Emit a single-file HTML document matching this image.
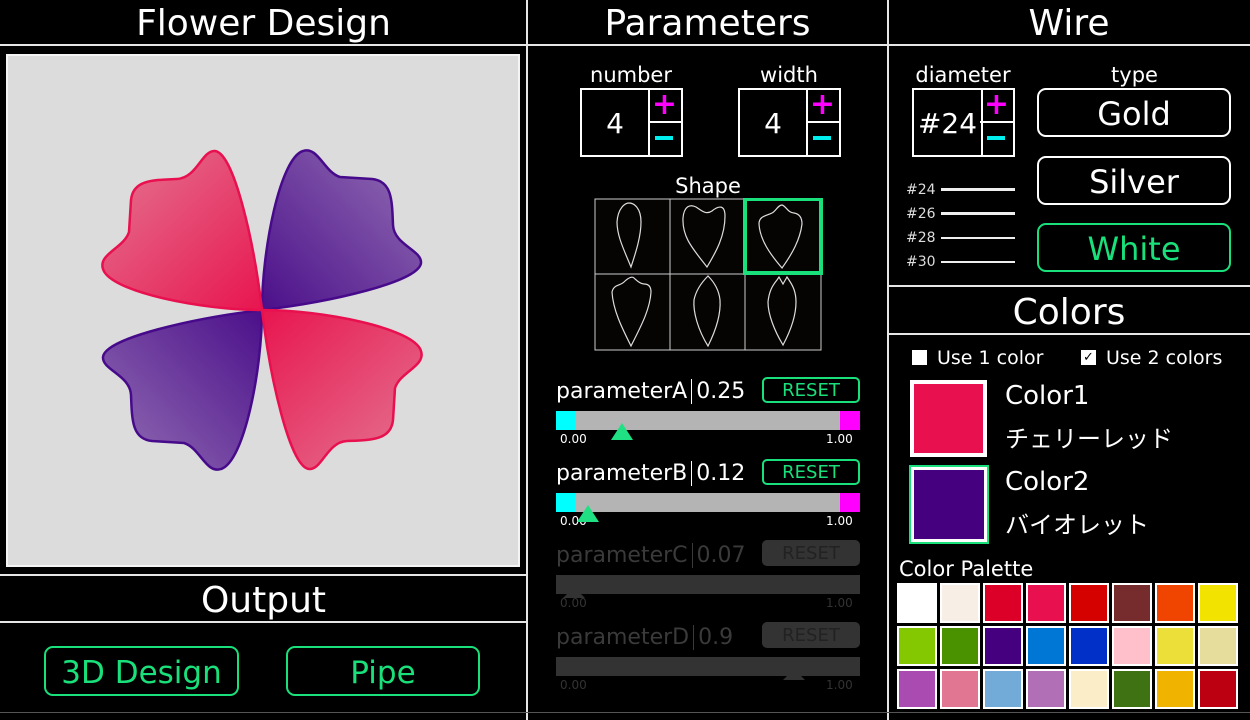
<!DOCTYPE html>
<html><head><meta charset="utf-8"><style>
*{margin:0;padding:0;box-sizing:border-box}
body{width:1250px;height:720px;background:#000;position:relative;overflow:hidden;font-family:"DejaVu Sans","Liberation Sans","Noto Sans CJK JP",sans-serif;color:#fff}
.a{position:absolute}
.h{position:absolute;background:#e6e6e6}
.t{position:absolute;text-align:center;white-space:nowrap}
.btn{position:absolute;border:2px solid #fff;border-radius:9px;text-align:center;color:#fff}
.g{border-color:#19e07a;color:#19e07a}
.sp{position:absolute;border:2px solid #fff}
.sp .v{position:absolute;left:0;top:0;height:100%;text-align:center;font-size:28px;border-right:2px solid #fff}
.sp .pl{position:absolute;right:0;top:0;height:50%;border-bottom:2px solid #fff}
.cell{position:absolute;width:40px;height:40px;border:2px solid #fff}
</style></head><body>
<div class="h" style="left:526px;top:0;width:2px;height:720px"></div>
<div class="h" style="left:887px;top:0;width:2px;height:720px"></div>
<div class="h" style="left:0;top:44px;width:1250px;height:2px"></div>
<div class="h" style="left:0;top:574px;width:527px;height:2px"></div>
<div class="h" style="left:0;top:621px;width:527px;height:2px"></div>
<div class="h" style="left:888px;top:285px;width:362px;height:2px"></div>
<div class="h" style="left:888px;top:333px;width:362px;height:2px"></div>
<div class="h" style="left:0;top:712px;width:1250px;height:1px;background:#555"></div>

<div class="t" style="left:0;width:527px;top:3px;font-size:36px">Flower Design</div>
<div class="t" style="left:527px;width:361px;top:3px;font-size:36px">Parameters</div>
<div class="t" style="left:888px;width:362px;top:3px;font-size:36px">Wire</div>
<div class="t" style="left:0;width:527px;top:580px;font-size:36px">Output</div>
<div class="t" style="left:888px;width:362px;top:292px;font-size:36px">Colors</div>

<div class="a" style="left:6px;top:54px;width:514px;height:513px;background:#dcdcdc;border:2px solid #f4f4f4"></div>
<svg class="a" style="left:0;top:0" width="527" height="575">
<defs>
<linearGradient id="gp" gradientUnits="userSpaceOnUse" x1="262" y1="310" x2="410" y2="170"><stop offset="0" stop-color="#4b0f8a"/><stop offset="1" stop-color="#8c66b0"/></linearGradient>
<linearGradient id="gr" gradientUnits="userSpaceOnUse" x1="262" y1="310" x2="410" y2="170"><stop offset="0" stop-color="#e8154f"/><stop offset="1" stop-color="#e46d8c"/></linearGradient>
<path id="pt" d="M262,310 C262,250 280,158 303,151 C318,146 324,172 340,177 L372,179 C392,181 392,200 393,225 C394,245 422,250 421,263 C419,282 330,302 262,310 Z"/>
</defs>
<use href="#pt" fill="url(#gp)" stroke="#460a8a" stroke-width="2.5"/>
<use href="#pt" fill="url(#gp)" stroke="#460a8a" stroke-width="2.5" transform="rotate(180 262 310)"/>
<use href="#pt" fill="url(#gr)" stroke="#e8104f" stroke-width="2.5" transform="rotate(-90 262 310)"/>
<use href="#pt" fill="url(#gr)" stroke="#e8104f" stroke-width="2.5" transform="rotate(90 262 310)"/>
</svg>

<div class="btn g" style="left:44px;top:646px;width:195px;height:50px;font-size:31px;line-height:50px">3D Design</div>
<div class="btn g" style="left:286px;top:646px;width:194px;height:50px;font-size:31px;line-height:50px">Pipe</div>

<div class="t" style="left:580px;width:102px;top:63px;font-size:21px">number</div>
<div class="t" style="left:738px;width:102px;top:63px;font-size:21px">width</div>
<div class="sp" style="left:580px;top:88px;width:103px;height:69px"><div class="v" style="width:68px;line-height:68px">4</div><div class="pl" style="width:33px;color:#f0f;font-size:30px;line-height:30px;text-align:center;font-weight:bold">+</div><div class="a" style="right:8px;bottom:15px;width:18px;height:4px;background:#0ee"></div></div>
<div class="sp" style="left:738px;top:88px;width:103px;height:69px"><div class="v" style="width:68px;line-height:68px">4</div><div class="pl" style="width:33px;color:#f0f;font-size:30px;line-height:30px;text-align:center;font-weight:bold">+</div><div class="a" style="right:8px;bottom:15px;width:18px;height:4px;background:#0ee"></div></div>
<div class="t" style="left:595px;width:226px;top:174px;font-size:21px">Shape</div>
<svg class="a" style="left:594px;top:198px" width="230" height="154">
<rect x="1" y="1" width="226" height="151" fill="#060303" stroke="#ccc"/>
<line x1="76" y1="1" x2="76" y2="152" stroke="#ccc"/><line x1="151" y1="1" x2="151" y2="152" stroke="#ccc"/><line x1="1" y1="76" x2="227" y2="76" stroke="#ccc"/>
<g fill="none" stroke="#ddd" stroke-width="1.2">
<path d="M37,69 C30,52 23,38 23,24 C24,10 31,5 35,5 C40,5 47,10 47,24 C47,38 42,54 37,69Z"/>
<path d="M113,69 C100,52 88,40 89,20 C90,8 96,6 102,9 C108,13 112,17 118,13 C124,8 131,6 131,18 C131,38 122,54 113,69Z"/>
<path d="M188,70 C176,56 166,42 165,26 C165,18 172,18 178,15 C182,13 184,7 188,7 C192,8 194,15 200,15 C206,16 208,20 208,26 C206,42 198,56 188,70Z"/>
<path d="M37,148 C28,130 19,112 18,94 C20,86 26,88 30,84 C34,80 38,78 40,80 C42,82 46,86 50,86 C54,86 57,88 57,94 C56,112 46,130 37,148Z"/>
<path d="M114,148 C104,132 99,114 100,102 C102,92 108,84 114,78 C120,84 125,92 126,102 C127,116 122,132 114,148Z"/>
<path d="M189,147 C180,132 174,116 174,104 C175,94 178,88 183,82 L185,79 L189,86 L193,79 L195,82 C199,88 202,94 202,104 C202,118 197,132 189,147Z"/>
</g>
<rect x="151" y="1" width="76" height="74" fill="none" stroke="#19e07a" stroke-width="4"/>
</svg>

<div class="a" style="left:556px;top:379px;font-size:22px;white-space:nowrap">parameterA<span style="border-left:1px solid #fff;margin:0 4px"></span>0.25</div>
<div class="btn g" style="left:762px;top:377px;width:98px;height:26px;font-size:18px;line-height:24px;border-radius:5px">RESET</div>
<div class="a" style="left:556px;top:411px;width:304px;height:19px;background:#b4b4b4"></div>
<div class="a" style="left:556px;top:411px;width:19px;height:19px;background:#0ff"></div>
<div class="a" style="left:840px;top:411px;width:20px;height:19px;background:#f0f"></div>
<div class="a" style="left:611px;top:423px;border-left:11px solid transparent;border-right:11px solid transparent;border-bottom:17px solid #1fe082"></div>
<div class="a" style="left:560px;top:432px;font-size:12px">0.00</div>
<div class="a" style="left:826px;top:432px;font-size:12px">1.00</div>

<div class="a" style="left:556px;top:461px;font-size:22px;white-space:nowrap">parameterB<span style="border-left:1px solid #fff;margin:0 4px"></span>0.12</div>
<div class="btn g" style="left:762px;top:459px;width:98px;height:26px;font-size:18px;line-height:24px;border-radius:5px">RESET</div>
<div class="a" style="left:556px;top:493px;width:304px;height:19px;background:#b4b4b4"></div>
<div class="a" style="left:556px;top:493px;width:19px;height:19px;background:#0ff"></div>
<div class="a" style="left:840px;top:493px;width:20px;height:19px;background:#f0f"></div>
<div class="a" style="left:560px;top:514px;font-size:12px">0.00</div>
<div class="a" style="left:826px;top:514px;font-size:12px">1.00</div>
<div class="a" style="left:577px;top:505px;border-left:11px solid transparent;border-right:11px solid transparent;border-bottom:17px solid #1fe082"></div>

<div class="a" style="left:556px;top:543px;font-size:22px;white-space:nowrap;color:#3a3a3a">parameterC<span style="border-left:1px solid #3a3a3a;margin:0 4px"></span>0.07</div>
<div class="a" style="left:762px;top:540px;width:98px;height:26px;font-size:18px;line-height:28px;border-radius:5px;background:#333;color:#222;text-align:center">RESET</div>
<div class="a" style="left:556px;top:575px;width:304px;height:19px;background:#333"></div>
<div class="a" style="left:563px;top:587px;border-left:11px solid transparent;border-right:11px solid transparent;border-bottom:11px solid #333"></div>
<div class="a" style="left:560px;top:596px;font-size:12px;color:#333">0.00</div>
<div class="a" style="left:826px;top:596px;font-size:12px;color:#333">1.00</div>

<div class="a" style="left:556px;top:625px;font-size:22px;white-space:nowrap;color:#3a3a3a">parameterD<span style="border-left:1px solid #3a3a3a;margin:0 4px"></span>0.9</div>
<div class="a" style="left:762px;top:622px;width:98px;height:26px;font-size:18px;line-height:28px;border-radius:5px;background:#333;color:#222;text-align:center">RESET</div>
<div class="a" style="left:556px;top:657px;width:304px;height:19px;background:#333"></div>
<div class="a" style="left:783px;top:669px;border-left:11px solid transparent;border-right:11px solid transparent;border-bottom:11px solid #333"></div>
<div class="a" style="left:560px;top:678px;font-size:12px;color:#333">0.00</div>
<div class="a" style="left:826px;top:678px;font-size:12px;color:#333">1.00</div>

<div class="t" style="left:908px;width:110px;top:63px;font-size:21px">diameter</div>
<div class="t" style="left:1038px;width:193px;top:63px;font-size:21px">type</div>
<div class="sp" style="left:912px;top:88px;width:103px;height:69px"><div class="v" style="width:69px;line-height:68px">#24</div><div class="pl" style="width:33px;color:#f0f;font-size:30px;line-height:30px;text-align:center;font-weight:bold">+</div><div class="a" style="right:8px;bottom:15px;width:18px;height:4px;background:#0ee"></div></div>
<div class="btn" style="left:1037px;top:88px;width:194px;height:49px;font-size:32px;line-height:49px">Gold</div>
<div class="btn" style="left:1037px;top:156px;width:194px;height:49px;font-size:32px;line-height:49px">Silver</div>
<div class="btn g" style="left:1037px;top:223px;width:194px;height:49px;font-size:32px;line-height:49px">White</div>
<div class="a" style="left:906px;top:182px;font-size:14px;color:#ddd">#24</div><div class="a" style="left:941px;top:188px;width:74px;height:3px;background:#eee"></div>
<div class="a" style="left:906px;top:206px;font-size:14px;color:#ddd">#26</div><div class="a" style="left:941px;top:212px;width:74px;height:2.5px;background:#eee"></div>
<div class="a" style="left:906px;top:230px;font-size:14px;color:#ddd">#28</div><div class="a" style="left:941px;top:237px;width:74px;height:2px;background:#eee"></div>
<div class="a" style="left:906px;top:254px;font-size:14px;color:#ddd">#30</div><div class="a" style="left:941px;top:261px;width:74px;height:2px;background:#eee"></div>

<div class="a" style="left:912px;top:350px;width:15px;height:15px;background:#fff"></div>
<div class="a" style="left:937px;top:347px;font-size:19px">Use 1 color</div>
<div class="a" style="left:1081px;top:350px;width:15px;height:15px;background:#fff;color:#000;font-size:13px;line-height:15px;text-align:center">✓</div>
<div class="a" style="left:1106px;top:347px;font-size:19px">Use 2 colors</div>
<div class="a" style="left:910px;top:380px;width:77px;height:77px;border:4px solid #fff;background:#e8104f"></div>
<div class="a" style="left:1005px;top:381px;font-size:26px">Color1</div>
<div class="a" style="left:1005px;top:419px;font-size:24px">チェリーレッド</div>
<div class="a" style="left:909px;top:465px;width:80px;height:79px;border:2px solid #19e07a"><div style="width:100%;height:100%;border:3px solid #fff;background:#45007f"></div></div>
<div class="a" style="left:1005px;top:467px;font-size:26px">Color2</div>
<div class="a" style="left:1005px;top:505px;font-size:24px">バイオレット</div>
<div class="a" style="left:899px;top:557px;font-size:21px">Color Palette</div>
<div class="a" style="left:897px;top:583px;width:345px;height:127px">
<div class="cell" style="left:0;top:0;background:#fff"></div><div class="cell" style="left:43px;top:0;background:#f7efe6"></div><div class="cell" style="left:86px;top:0;background:#dc0028"></div><div class="cell" style="left:129px;top:0;background:#e8104f"></div><div class="cell" style="left:172px;top:0;background:#d50000"></div><div class="cell" style="left:215px;top:0;background:#762c2c"></div><div class="cell" style="left:258px;top:0;background:#ef4500"></div><div class="cell" style="left:301px;top:0;background:#f2e400"></div>
<div class="cell" style="left:0;top:43px;background:#83c800"></div><div class="cell" style="left:43px;top:43px;background:#4a9200"></div><div class="cell" style="left:86px;top:43px;background:#44007f"></div><div class="cell" style="left:129px;top:43px;background:#0077d5"></div><div class="cell" style="left:172px;top:43px;background:#0030c8"></div><div class="cell" style="left:215px;top:43px;background:#ffc0cc"></div><div class="cell" style="left:258px;top:43px;background:#ecdf3a"></div><div class="cell" style="left:301px;top:43px;background:#e6dc9c"></div>
<div class="cell" style="left:0;top:86px;background:#a94bb0"></div><div class="cell" style="left:43px;top:86px;background:#e17692"></div><div class="cell" style="left:86px;top:86px;background:#72aad8"></div><div class="cell" style="left:129px;top:86px;background:#b170b6"></div><div class="cell" style="left:172px;top:86px;background:#fbedc8"></div><div class="cell" style="left:215px;top:86px;background:#3f7213"></div><div class="cell" style="left:258px;top:86px;background:#f0b400"></div><div class="cell" style="left:301px;top:86px;background:#bc0012"></div>
</div>
</body></html>
